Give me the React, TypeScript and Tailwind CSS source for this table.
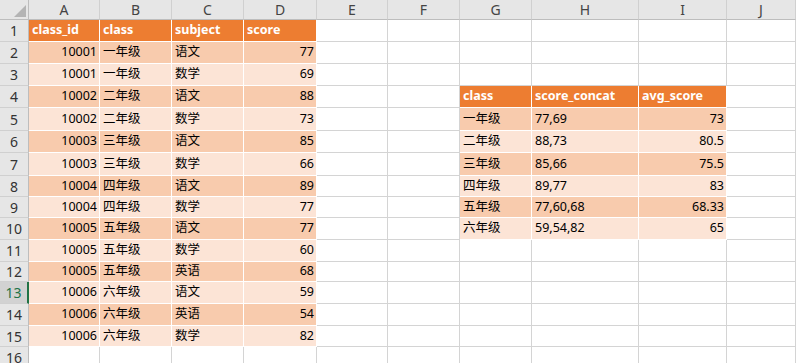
import React from "react";

type Kind = "head" | "dark" | "light" | null;
type Cell = { t: string; k: Kind; r?: boolean };

const COLS = ["A", "B", "C", "D", "E", "F", "G", "H", "I", "J"];
const COL_W = [
  "w-[71px]",
  "w-[72px]",
  "w-[72px]",
  "w-[73px]",
  "w-[71px]",
  "w-[72px]",
  "w-[72px]",
  "w-[107px]",
  "w-[88px]",
  "flex-1",
];
const ROW_H = [
  "h-[22px]",
  "h-[22px]",
  "h-[22px]",
  "h-[22px]",
  "h-[23px]",
  "h-[22px]",
  "h-[23px]",
  "h-[21px]",
  "h-[21px]",
  "h-[22px]",
  "h-[22px]",
  "h-[20px]",
  "h-[22px]",
  "h-[22px]",
  "h-[21px]",
  "h-[22px]",
];

const scores: [string, string, string, string][] = [
  ["10001", "一年级", "语文", "77"],
  ["10001", "一年级", "数学", "69"],
  ["10002", "二年级", "语文", "88"],
  ["10002", "二年级", "数学", "73"],
  ["10003", "三年级", "语文", "85"],
  ["10003", "三年级", "数学", "66"],
  ["10004", "四年级", "语文", "89"],
  ["10004", "四年级", "数学", "77"],
  ["10005", "五年级", "语文", "77"],
  ["10005", "五年级", "数学", "60"],
  ["10005", "五年级", "英语", "68"],
  ["10006", "六年级", "语文", "59"],
  ["10006", "六年级", "英语", "54"],
  ["10006", "六年级", "数学", "82"],
];

const summary: [string, string, string][] = [
  ["一年级", "77,69", "73"],
  ["二年级", "88,73", "80.5"],
  ["三年级", "85,66", "75.5"],
  ["四年级", "89,77", "83"],
  ["五年级", "77,60,68", "68.33"],
  ["六年级", "59,54,82", "65"],
];

// build the sheet: 16 rows x 10 columns
const grid: Cell[][] = Array.from({ length: 16 }, () =>
  Array.from({ length: 10 }, () => ({ t: "", k: null as Kind }))
);

["class_id", "class", "subject", "score"].forEach((t, c) => {
  grid[0][c] = { t, k: "head" };
});
scores.forEach((row, i) => {
  const k: Kind = i % 2 === 0 ? "dark" : "light";
  grid[i + 1][0] = { t: row[0], k, r: true };
  grid[i + 1][1] = { t: row[1], k };
  grid[i + 1][2] = { t: row[2], k };
  grid[i + 1][3] = { t: row[3], k, r: true };
});

["class", "score_concat", "avg_score"].forEach((t, c) => {
  grid[3][c + 6] = { t, k: "head" };
});
summary.forEach((row, i) => {
  const k: Kind = i % 2 === 0 ? "dark" : "light";
  grid[i + 4][6] = { t: row[0], k };
  grid[i + 4][7] = { t: row[1], k };
  grid[i + 4][8] = { t: row[2], k, r: true };
});

const kindClass = (k: Kind) => {
  if (k === "head") return "bg-[#ed7d31] border-white text-white font-bold";
  if (k === "dark") return "bg-[#f8cbad] border-white text-black";
  if (k === "light") return "bg-[#fce4d6] border-white text-black";
  return "bg-white border-[#d4d4d4]";
};

export default function App() {
  return (
    <div className="w-[796px] h-[363px] overflow-hidden bg-white font-['Noto_Sans','Noto_Sans_CJK_SC',sans-serif] select-none">
      {/* column letters */}
      <div className="flex h-[20px]">
        <div className="w-[29px] shrink-0 bg-[#e6e6e6] border-r border-b border-[#bdbdbd] flex items-end justify-end pr-[2px] pb-[2px]">
          <svg width="12" height="12" viewBox="0 0 12 12">
            <polygon points="12,0 12,12 0,12" fill="#b4b4b4" />
          </svg>
        </div>
        {COLS.map((c, i) => (
          <div
            key={c}
            className={`${COL_W[i]} shrink-0 bg-[#e6e6e6] border-r border-r-[#d0d0d0] border-b border-b-[#bdbdbd] flex items-center justify-center text-[14px] text-[#444]`}
          >
            {c}
          </div>
        ))}
      </div>

      {grid.map((row, ri) => {
        const selected = ri === 12;
        return (
          <div key={ri} className={`flex ${ROW_H[ri]}`}>
            <div
              className={`w-[29px] shrink-0 border-b border-b-[#d0d0d0] flex items-center justify-center text-[14px] ${
                selected
                  ? "bg-[#d2d2d2] text-[#217346] border-r-2 border-r-[#217346]"
                  : "bg-[#e6e6e6] text-[#333] border-r border-r-[#bdbdbd]"
              }`}
            >
              {ri + 1}
            </div>
            {row.map((cell, ci) => (
              <div
                key={ci}
                className={`${COL_W[ci]} shrink-0 flex items-center border-r border-b whitespace-nowrap overflow-hidden text-[12.5px] ${kindClass(
                  cell.k
                )} ${cell.r ? "justify-end pr-[2px]" : "pl-[3px]"}`}
              >
                {cell.t}
              </div>
            ))}
          </div>
        );
      })}
    </div>
  );
}
